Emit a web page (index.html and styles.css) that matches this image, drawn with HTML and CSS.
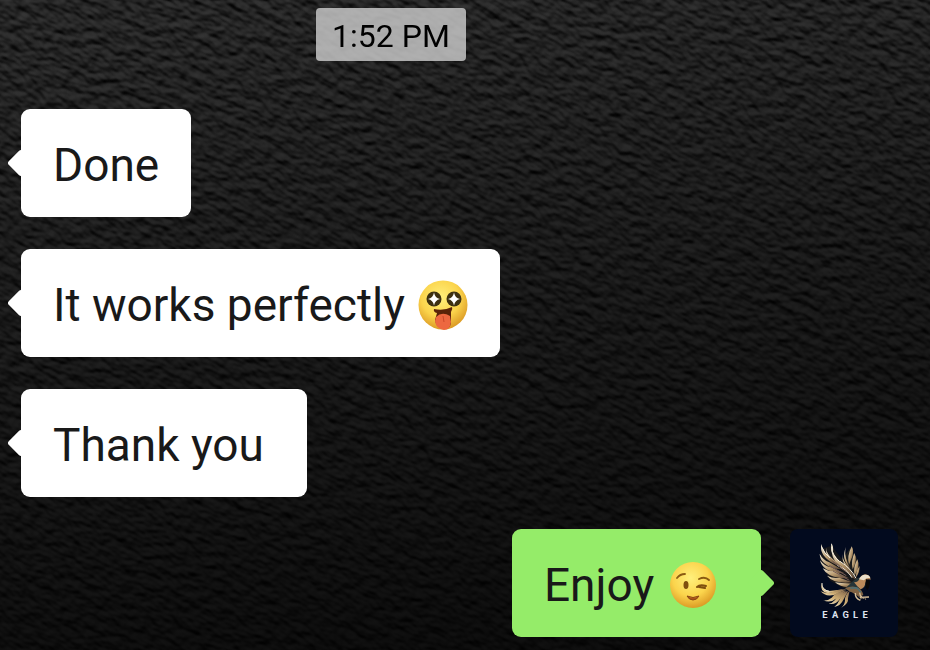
FILE: index.html
```html
<!DOCTYPE html>
<html lang="en">
<head>
  <meta charset="utf-8">
  <title>Chat</title>
  <link rel="stylesheet" href="styles.css">
</head>
<body>

<!-- leather wallpaper -->
<svg class="wallpaper" viewBox="0 0 930 650" preserveAspectRatio="xMidYMid slice" aria-hidden="true">
  <defs>
    <filter id="leather" x="0" y="0" width="100%" height="100%" color-interpolation-filters="sRGB">
      <feTurbulence type="fractalNoise" baseFrequency="0.08 0.13" numOctaves="2" seed="8"/>
      <feGaussianBlur stdDeviation="0.7"/>
      <feDiffuseLighting surfaceScale="3" diffuseConstant="1" lighting-color="#373737">
        <feDistantLight azimuth="235" elevation="42"/>
      </feDiffuseLighting>
    </filter>
    <linearGradient id="shade" x1="0.3" y1="0" x2="0.45" y2="1">
      <stop offset="0" stop-color="#000" stop-opacity="0"/>
      <stop offset="0.45" stop-color="#000" stop-opacity="0.35"/>
      <stop offset="1" stop-color="#000" stop-opacity="0.7"/>
    </linearGradient>
  </defs>
  <g transform="rotate(28 465 325)">
    <rect x="-150" y="-250" width="1230" height="1150" filter="url(#leather)"/>
  </g>
  <rect width="930" height="650" fill="url(#shade)"/>
</svg>

<main class="chat">
  <div class="stamp"><time datetime="13:52">1:52 PM</time></div>

  <div class="row">
    <p class="bubble received">Done</p>
  </div>

  <div class="row">
    <p class="bubble received">It works perfectly
      <svg class="emoji" viewBox="0 0 50 50" role="img" aria-label="amazed">
        <defs>
          <radialGradient id="face" cx="0.45" cy="0.35" r="0.65">
            <stop offset="0" stop-color="#fff07c"/>
            <stop offset="0.6" stop-color="#fbd44c"/>
            <stop offset="1" stop-color="#dc9b25"/>
          </radialGradient>
        </defs>
        <circle cx="25" cy="25" r="24.5" fill="url(#face)"/>
        <circle cx="16" cy="19" r="7.5" fill="#3d3010"/>
        <circle cx="36" cy="19" r="7.5" fill="#3d3010"/>
        <path d="M16 12.500Q17 18 22 19Q17 20 16 25.500Q15 20 10 19Q15 18 16 12.500Z" fill="#fff"/>
        <path d="M36 12.500Q37 18 42 19Q37 20 36 25.500Q35 20 30 19Q35 18 36 12.500Z" fill="#fff"/>
        <path d="M16 29Q26 31 34 27Q35 29 33 32L33 43Q32 49 26 49Q18 48 17 40L19 33Q15 32 16 29Z" fill="#5a2309"/>
        <path d="M18 37Q24 31 32 36L33 42Q32 50 26 50Q18 49 17 41Z" fill="#ed6840"/>
        <path d="M25 36L26 42" stroke="#cb4829" fill="none"/>
      </svg>
    </p>
  </div>

  <div class="row">
    <p class="bubble received">Thank you&nbsp;</p>
  </div>

  <div class="row row-sent">
    <p class="bubble sent">Enjoy
      <svg class="emoji" viewBox="0 0 50 50" role="img" aria-label="wink">
        <circle cx="25" cy="25" r="23" fill="url(#face)"/>
        <path d="M9 18Q12 14 17 14" stroke="#8a5b12" stroke-width="1.800" stroke-linecap="round" fill="none"/>
        <path d="M31 19Q37 16 41 20" stroke="#8a5b12" stroke-width="1.800" stroke-linecap="round" fill="none"/>
        <ellipse cx="18" cy="25" rx="2.500" ry="4" fill="#80500e"/>
        <path d="M29 27Q32 24 38 26M31 27L37 28" stroke="#80500e" stroke-width="2" stroke-linecap="round" fill="none"/>
        <path d="M19 36Q25 39 31 36Q29 40 25 40Q21 40 19 36Z" fill="#a9521b" stroke="#8a4512"/>
      </svg>&nbsp;
    </p>
    <svg class="avatar" viewBox="30 30 324 324" role="img" aria-label="Eagle">
      <defs>
        <linearGradient id="gold" x1="0" y1="0" x2="1" y2="1">
          <stop offset="0" stop-color="#f2ead6"/>
          <stop offset="0.5" stop-color="#b99b70"/>
          <stop offset="1" stop-color="#55402f"/>
        </linearGradient>
        <linearGradient id="tail" x1="1" y1="0" x2="0" y2="1">
          <stop offset="0" stop-color="#80654a"/>
          <stop offset="0.6" stop-color="#cfae75"/>
          <stop offset="1" stop-color="#e9dcb9"/>
        </linearGradient>
      </defs>
      <rect x="30" y="30" width="324" height="324" fill="#020a1e"/>
      <!-- wing shadows -->
      <path d="M126 90L154 80L190 125L232 170L238 205L200 212L150 185L122 125Z" fill="#171719"/>
      <path d="M187 120L210 88L232 120L238 160L226 172Z" fill="#1d1e1d"/>
      <!-- far wing -->
      <g fill="url(#gold)">
        <path d="M215 82Q225 98 213 122L207 137Q200 112 215 82Z"/>
        <path d="M198 84Q191 104 203 132L211 148Q182 121 198 84Z"/>
        <path d="M223 102Q234 122 218 151Q212 128 223 102Z"/>
        <path d="M232 121Q242 142 224 169Q218 146 232 121Z"/>
        <path d="M187 105Q188 127 207 145L216 160Q185 140 187 105Z"/>
        <path d="M239 141Q239 162 228 174Q227 157 239 141Z"/>
      </g>
      <!-- near wing -->
      <g fill="url(#gold)">
        <path d="M153 73Q161 78 159 99Q168 120 193 137Q218 156 227 183Q204 161 181 147Q151 121 153 73Z"/>
        <path d="M138 86Q139 103 159 121L191 148Q159 136 145 116Q136 101 138 86Z"/>
        <path d="M124 75Q128 94 145 111L173 139Q145 129 130 108Q120 92 124 75Z"/>
        <path d="M119 104Q128 122 148 130L184 151Q151 149 132 132Q119 119 119 104Z"/>
        <path d="M120 124Q133 142 153 145L194 163Q160 164 139 151Q124 141 120 124Z"/>
        <path d="M128 148Q145 158 164 157L207 178Q171 179 149 168Q134 160 128 148Z"/>
        <path d="M141 170Q160 179 178 176L217 190Q188 194 165 187Q150 181 141 170Z"/>
        <path d="M165 190Q188 194 222 193L211 204Q184 207 165 190Z"/>
      </g>
      <g fill="none" stroke="#f4eee0" stroke-width="3">
        <path d="M155 83Q154 108 179 128"/>
        <path d="M180 127Q214 149 228 178"/>
        <path d="M126 85Q131 102 150 117"/>
        <path d="M172 139Q201 151 216 176"/>
      </g>
      <g fill="none" stroke="#745b57" stroke-width="3">
        <path d="M157 126L199 158M148 139L199 170M159 156L208 184"/>
      </g>
      <!-- tail -->
      <g fill="url(#tail)">
        <path d="M125 191Q126 212 148 216L190 211Q163 223 141 222Q119 216 125 191Z"/>
        <path d="M200 211Q169 212 151 222Q134 223 122 217Q137 235 164 227Z"/>
        <path d="M199 214Q169 218 155 236Q143 246 130 244Q151 254 171 237Z"/>
        <path d="M202 215Q174 224 165 243Q157 253 146 254Q168 258 180 239Z"/>
        <path d="M205 215Q184 226 178 244Q172 258 163 264Q182 261 191 241Z"/>
        <path d="M209 215Q194 228 195 244Q195 257 184 266Q207 254 204 238Z"/>
      </g>
      <path d="M126 192Q124 213 148 217" fill="none" stroke="#e9e5d7" stroke-width="3"/>
      <!-- body, head and claws -->
      <path d="M220 185L239 174L259 188Q260 203 244 211L216 218L194 210Z" fill="#253438"/>
      <path d="M222 190Q233 191 238 181Q241 169 255 166Q270 167 272 182L267 181Q259 183 256 193Q254 206 242 211L232 202Z" fill="#ba8a5b"/>
      <path d="M237 181Q243 166 257 167Q270 168 271 178Q260 175 252 184Z" fill="#eadfc9"/>
      <path d="M258 181Q270 180 270 191L267 204L262 214Q253 203 258 181Z" fill="#050608"/>
      <path d="M195 207Q220 198 235 207Q247 213 250 228L237 234Q220 220 210 218Z" fill="#806344"/>
      <path d="M211 207L231 207L243 220" fill="none" stroke="#487078" stroke-width="4"/>
      <path d="M226 222Q225 238 241 244M239 221Q241 237 252 237M239 235L267 234" fill="none" stroke="#d8bf98" stroke-width="4"/>
      <path d="M239 242L246 236M254 236L257 242" fill="none" stroke="#a8987c" stroke-width="3"/>
      <text class="avatar-name" x="127" y="297">EAGLE</text>
    </svg>
  </div>
</main>

</body>
</html>
```
FILE: styles.css
```css
body {
    margin: 0;
    background: #141414;
    font-family: Roboto, "Liberation Sans", Arial, sans-serif;
    color: #191919;
}

.wallpaper {
    position: fixed;
    top: 0;
    left: 0;
    z-index: -1;
    width: 100%;
    height: 100%;
}

.chat {
    display: flex;
    flex-direction: column;
    gap: 32px;
    padding: 8px 32px 12px 21px;
}

.stamp {
    display: flex;
    justify-content: center;
    margin-bottom: 16px;
    padding-right: 137px;
}

.stamp time {
    padding: 3px 16px 0;
    border-radius: 4px;
    background: rgba(208, 208, 208, 0.8);
    color: #000;
    font-size: 32px;
    line-height: 50px;
}

.row {
    display: flex;
    align-items: center;
}

.row-sent {
    justify-content: flex-end;
    gap: 29px;
}

.bubble {
    position: relative;
    margin: 0;
    padding: 4px 32px 0;
    border-radius: 9px;
    font-size: 46px;
    line-height: 104px;
}

.received {
    background: #fff;
}

.sent {
    background: #95ec69;
}

/* little arrow at the side of each bubble */
.bubble::before {
    content: "";
    position: absolute;
    top: 44px;
    width: 20px;
    height: 20px;
    border-radius: 3px;
    background: inherit;
    transform: rotate(45deg);
}

.received::before {
    left: -10px;
}

.sent::before {
    right: -10px;
}

.emoji {
    width: 50px;
    height: 50px;
    margin-left: 2px;
    vertical-align: -9px;
}

.avatar {
    width: 108px;
    height: 108px;
    border-radius: 8px;
}

.avatar-name {
    fill: #dfe3ef;
    font-size: 28px;
    font-weight: bold;
    letter-spacing: 13px;
}
```
